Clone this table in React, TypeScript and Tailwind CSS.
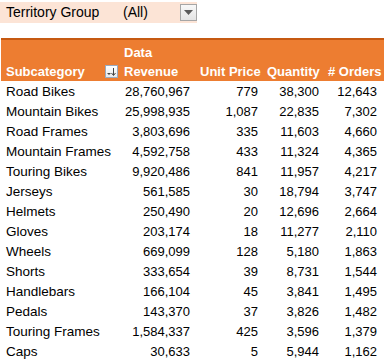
const rows: [string, string, string, string, string][] = [
  ["Road Bikes", "28,760,967", "779", "38,300", "12,643"],
  ["Mountain Bikes", "25,998,935", "1,087", "22,835", "7,302"],
  ["Road Frames", "3,803,696", "335", "11,603", "4,660"],
  ["Mountain Frames", "4,592,758", "433", "11,324", "4,365"],
  ["Touring Bikes", "9,920,486", "841", "11,957", "4,217"],
  ["Jerseys", "561,585", "30", "18,794", "3,747"],
  ["Helmets", "250,490", "20", "12,696", "2,664"],
  ["Gloves", "203,174", "18", "11,277", "2,110"],
  ["Wheels", "669,099", "128", "5,180", "1,863"],
  ["Shorts", "333,654", "39", "8,731", "1,544"],
  ["Handlebars", "166,104", "45", "3,841", "1,495"],
  ["Pedals", "143,370", "37", "3,826", "1,482"],
  ["Touring Frames", "1,584,337", "425", "3,596", "1,379"],
  ["Caps", "30,633", "5", "5,944", "1,162"],
];

const cols = "grid grid-cols-[120px_76px_66px_61px_61px]";

function DropButton() {
  return (
    <div className="flex h-[17px] w-[17px] items-center justify-center border border-[#a6a6a6] bg-gradient-to-b from-[#f8f8f8] to-[#e4e4e4]">
      <svg width="9" height="5" viewBox="0 0 9 5">
        <path d="M0 0 H9 L4.5 5 Z" fill="#5a5a5a" />
      </svg>
    </div>
  );
}

function SortButton() {
  return (
    <div className="flex h-[13px] w-[13px] items-center justify-center border border-[#9aaabf] bg-gradient-to-b from-[#ffffff] to-[#e6e9ee]">
      <svg width="11" height="11" viewBox="0 0 11 11">
        <path d="M1 7 H5 L3 9 Z" fill="#444" />
        <path d="M7.5 2 V9" stroke="#444" strokeWidth="1" />
        <path d="M5.5 7 L7.5 9.5 L9.5 7" stroke="#444" strokeWidth="1" fill="none" />
      </svg>
    </div>
  );
}

export default function App() {
  return (
    <div className="h-[363px] w-[388px] overflow-hidden bg-white font-['Liberation_Sans',Arial,sans-serif] text-black">
      <div className="mt-[2px] flex h-[21px] w-[197px] items-center bg-[#fce4d6] text-[14px]">
        <span className="w-[123px] pl-[6px]">Territory Group</span>
        <span className="flex-1">(All)</span>
        <DropButton />
      </div>

      <div className="mt-[15px] w-[384px] pl-[1px]">
        <div className={`${cols} h-[43px] border-t-2 border-[#c65911] bg-[#ed7d31] pt-[3px] text-[13px] font-bold leading-[19px] text-white`}>
          <div className="flex items-end justify-between pl-[5px] pr-[3px]">
            <span>Subcategory</span>
            <div className="mb-[3px]">
              <SortButton />
            </div>
          </div>
          <div className="flex flex-col pl-[3px]">
            <span>Data</span>
            <span>Revenue</span>
          </div>
          <div className="flex items-end pl-[3px]">Unit Price</div>
          <div className="flex items-end pl-[4px]">Quantity</div>
          <div className="flex items-end pl-[4px]">
            <span># Orders</span>
          </div>
        </div>

        <div className="pt-[1px]">
          {rows.map((r) => (
            <div key={r[0]} className={`${cols} h-[20px] items-center text-[13px]`}>
              <div className="pl-[5px] text-[13.5px]">{r[0]}</div>
              <div className="pr-[7px] text-right">{r[1]}</div>
              <div className="pr-[5px] text-right">{r[2]}</div>
              <div className="pr-[5px] text-right">{r[3]}</div>
              <div className="pr-[8px] text-right">{r[4]}</div>
            </div>
          ))}
        </div>
      </div>
    </div>
  );
}
